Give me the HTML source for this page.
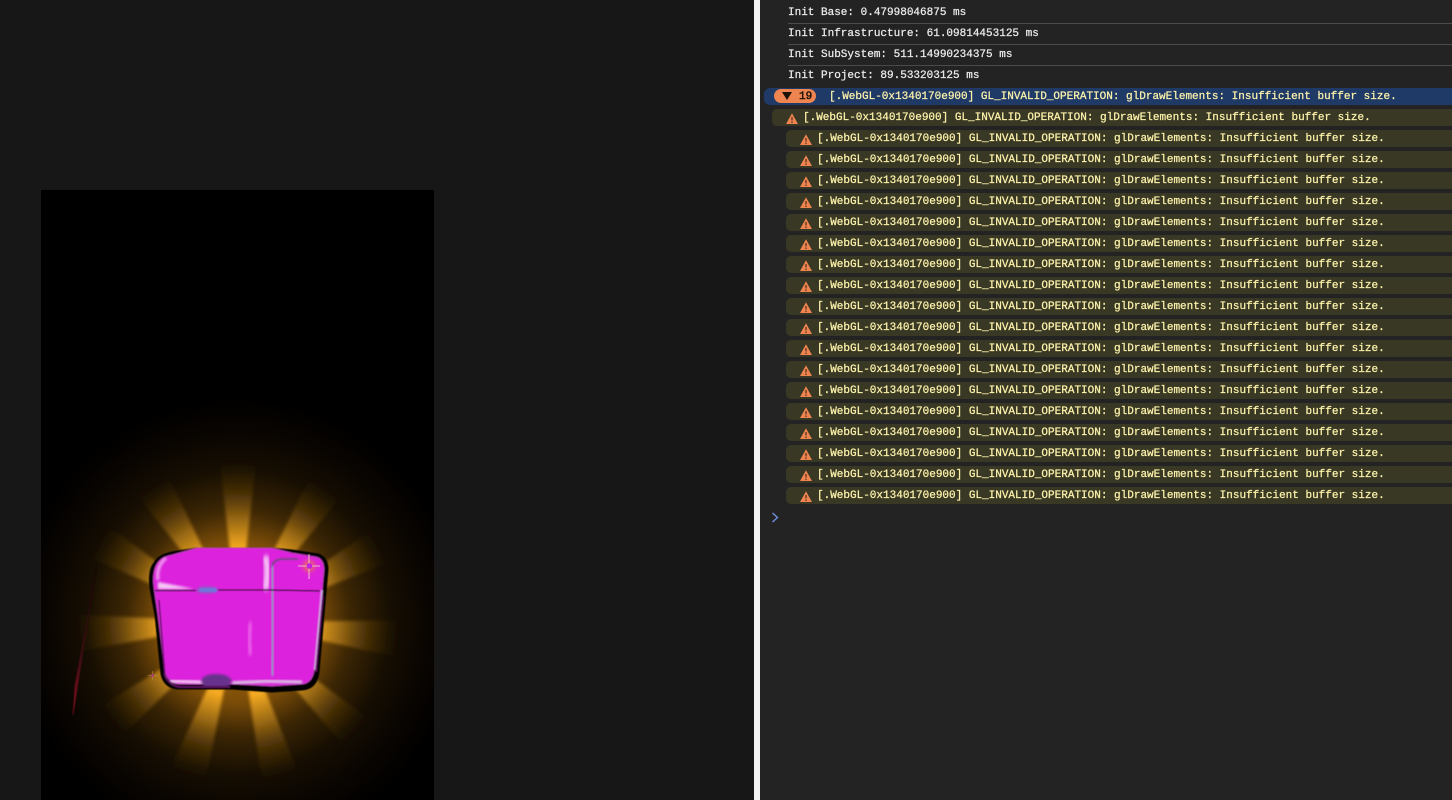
<!DOCTYPE html>
<html><head><meta charset="utf-8">
<style>
html,body{margin:0;padding:0;width:1452px;height:800px;overflow:hidden;background:#171717}
#strip{position:absolute;left:754px;top:0;width:6px;height:800px;background:#f4f4f4}
#dev{position:absolute;left:760px;top:0;width:692px;height:800px;background:#232323}
#cv{position:absolute;left:0;top:0;display:block;overflow:hidden}
.t{position:absolute;margin-top:1px;font:11px/14px "Liberation Mono",monospace;white-space:pre;color:#ececec;-webkit-text-stroke:.25px currentColor}
.y{color:#fdf3ac}
.l{position:absolute;left:788px;width:664px;height:1px;background:#4a4a4a}
.w{position:absolute;left:786px;width:666px;height:17px;background:#393824;border-radius:5px 0 0 5px}
.i{position:absolute;margin-top:1px;width:12px;height:11px}
</style></head><body>
<svg id="cv" width="760" height="800" viewBox="0 0 760 800">
<defs>
<radialGradient id="ray" gradientUnits="userSpaceOnUse" cx="238" cy="622" r="165">
<stop offset="0" stop-color="#ffb51f"/><stop offset=".45" stop-color="#f5aa20"/><stop offset=".62" stop-color="#a87416" stop-opacity=".85"/><stop offset=".8" stop-color="#5a3c0a" stop-opacity=".5"/><stop offset="1" stop-color="#2a1c04" stop-opacity="0"/></radialGradient>
<radialGradient id="glow" gradientUnits="userSpaceOnUse" cx="238" cy="622" r="225">
<stop offset="0" stop-color="#c07a10"/><stop offset=".36" stop-color="#7a4c08"/><stop offset=".5" stop-color="#3c2604"/><stop offset=".68" stop-color="#160e02"/><stop offset=".86" stop-color="#080401"/><stop offset="1" stop-color="#000"/></radialGradient>
<linearGradient id="red" x1="0" y1="0" x2="0" y2="1"><stop offset="0" stop-color="#180408"/><stop offset=".6" stop-color="#3a0a12"/><stop offset="1" stop-color="#8a1222"/></linearGradient>
<filter id="b1" x="-30%" y="-30%" width="160%" height="160%"><feGaussianBlur stdDeviation="1"/></filter>
<filter id="b2" x="-50%" y="-50%" width="200%" height="200%"><feGaussianBlur stdDeviation="2"/></filter>
<filter id="b5" x="-50%" y="-50%" width="200%" height="200%"><feGaussianBlur stdDeviation=".6"/></filter>
<filter id="bx" x="-5%" y="-5%" width="110%" height="110%"><feGaussianBlur stdDeviation=".55"/></filter>
<filter id="br" x="-5%" y="-5%" width="110%" height="110%"><feGaussianBlur stdDeviation="1.5"/></filter>
<clipPath id="cc"><rect x="41" y="190" width="393" height="610"/></clipPath>
<clipPath id="boxc"><path d="M156 563Q160 556 172 554L197 548H272L292 552L316 556Q326 558 326 570L324 592L316 672Q314 685 302 686L272 689L232 686L178 686Q166 684 163 672L157 615L152 588Q150 570 156 563Z"/></clipPath>
</defs>
<rect x="41" y="190" width="393" height="610" fill="#000"/>
<g clip-path="url(#cc)">
<rect x="41" y="397" width="393" height="403" fill="url(#glow)"/>
<g fill="url(#ray)" filter="url(#br)">
<polygon points="238,622 215.4,423.2 260.6,423.2"/>
<polygon points="238,622 327.2,443 365.2,467.6"/>
<polygon points="238,622 402.8,508.8 424,548.6"/>
<polygon points="238,622 434,620.2 433.2,665.2"/>
<polygon points="238,622 398.8,741 367.8,774"/>
<polygon points="238,622 308.2,798 264.6,798"/>
<polygon points="238,622 201.900,798 156.800,798"/>
<polygon points="238,622 95.4,762.2 67.4,726.4"/>
<polygon points="238,622 42,658.4 42,613.2"/>
<polygon points="238,622 54.6,542.2 77.2,503"/>
<polygon points="238,622 113.6,465.4 151.8,441.4"/>
</g>
<polygon points="97,565 73,715 75,685" fill="url(#red)" stroke="url(#red)" stroke-width=".5" filter="url(#b5)"/>
<path d="M152.500 671V680M148 675.500H157" fill="none" stroke="#b89a60" stroke-width=".5"/>
<circle cx="152.500" cy="675.500" r="1.200" fill="#c020a0"/>
</g>
<g filter="url(#bx)">
<path d="M154 563Q158 555 172 552L197 548H270L292 550L318 554Q328 557 328 570L326 592L319 672Q317 689 302 690L272 692L232 689L178 689Q164 688 161 674L155 615L150 588Q148 570 154 563Z" fill="#000" stroke="#000" stroke-width="1"/>
<path d="M157 564Q161 557 172 555L197 548H272L292 553L316 557Q324 559 324 570L322 592L314 671Q312 683 302 684L272 686L232 684L178 684Q168 682 165 672L158 615L154 588Q152 572 157 564Z" fill="#dd22dd" stroke="#b040b0" stroke-width="1"/>
<g clip-path="url(#boxc)">
<path d="M158 582L194 589H158Z" fill="#f6c8f6" filter="url(#b1)"/>
<path d="M158 580Q156 566 166 558" fill="none" stroke="#f0a0f0" stroke-width="3" filter="url(#b1)"/>
<path d="M170 681L228 683" fill="none" stroke="#f6d8f6" stroke-width="3" filter="url(#b1)"/>
<path d="M265 556Q270 570 265 590" fill="none" stroke="#fbe6fb" stroke-width="7" opacity=".85" filter="url(#b2)"/>
<path d="M272 568Q272 560 282 559L298 559" fill="none" stroke="#5a5070" stroke-width="1.500" filter="url(#b5)"/>
<path d="M272 566Q274 630 272 676" fill="none" stroke="#9a88c8" stroke-width="5" filter="url(#b1)"/>
<path d="M322 590L315 670" fill="none" stroke="#d8b8e8" stroke-width="2" filter="url(#b5)"/>
<path d="M232 683L268 681L302 682" fill="none" stroke="#d8cfe4" stroke-width="3" filter="url(#b1)"/>
<path d="M251 622Q247 640 251 655" fill="none" stroke="#ee70ee" stroke-width="4" filter="url(#b2)"/>
<path d="M155 590.500H196M218 590H272L320 591" stroke="#1a0a1e" stroke-width="1.300" fill="none"/>
<ellipse cx="207" cy="590" rx="11" ry="4" fill="#a04cc8" filter="url(#b1)"/>
<rect x="199" y="588" width="18" height="4" rx="2" fill="#6a78dc" filter="url(#b5)"/>
<path d="M201 681Q203 674 216 674T232 681L228 687H204Z" fill="#68308c" filter="url(#b1)"/>
</g>
<path d="M159 600L165 676Q170 686 180 687H230M316 672L323 596" fill="none" stroke="#6a1470" stroke-width="1.500"/>
</g>
<circle cx="309" cy="566" r="6" fill="#f0901c" opacity=".55" filter="url(#b2)"/>
<path d="M309 554V579M298 566H320" stroke="#f5e6c8" stroke-width=".8"/>
<circle cx="309.500" cy="566" r="2.800" fill="#c41ee8"/>
</svg>
<div id="strip"></div><div id="dev"></div>
<div class="t" style="left:788px;top:5px">Init Base: 0.47998046875 ms</div>
<div class="l" style="top:23px"></div>
<div class="t" style="left:788px;top:26px">Init Infrastructure: 61.09814453125 ms</div>
<div class="l" style="top:44px"></div>
<div class="t" style="left:788px;top:47px">Init SubSystem: 511.14990234375 ms</div>
<div class="l" style="top:65px"></div>
<div class="t" style="left:788px;top:68px">Init Project: 89.533203125 ms</div>
<div style="position:absolute;left:764px;top:88px;width:688px;height:17px;background:#1f3a66;border-radius:6px 0 0 6px"></div>
<div style="position:absolute;left:774px;top:89px;width:42px;height:14px;background:#ee8450;border-radius:7px"></div>
<svg style="position:absolute;left:781px;top:92px" width="12" height="9"><path d="M1 0H11L6 8Z" fill="#1c1208"/></svg>
<div class="t" style="left:799px;top:89px;color:#1c1208;-webkit-text-stroke:.45px #1c1208">19</div>
<div class="t y" style="left:829px;top:89px">[.WebGL-0x1340170e900] GL_INVALID_OPERATION: glDrawElements: Insufficient buffer size.</div>
<div class="w" style="left:772px;width:680px;top:109px"></div>
<svg class="i" style="left:786px;top:112px" viewBox="0 0 12 11"><path d="M6 0.300L12 11H0Z" fill="#ee8450"/><path d="M6 4V7.500M6 8.500V10" stroke="#7a4226" stroke-width="1.600"/></svg>
<div class="t y" style="left:803px;top:110px">[.WebGL-0x1340170e900] GL_INVALID_OPERATION: glDrawElements: Insufficient buffer size.</div>
<div class="w" style="top:130px"></div><svg class="i" style="left:800px;top:133px" viewBox="0 0 12 11"><path d="M6 0.300L12 11H0Z" fill="#ee8450"/><path d="M6 4V7.500M6 8.500V10" stroke="#7a4226" stroke-width="1.600"/></svg><div class="t y" style="left:817px;top:131px">[.WebGL-0x1340170e900] GL_INVALID_OPERATION: glDrawElements: Insufficient buffer size.</div>
<div class="w" style="top:151px"></div><svg class="i" style="left:800px;top:154px" viewBox="0 0 12 11"><path d="M6 0.300L12 11H0Z" fill="#ee8450"/><path d="M6 4V7.500M6 8.500V10" stroke="#7a4226" stroke-width="1.600"/></svg><div class="t y" style="left:817px;top:152px">[.WebGL-0x1340170e900] GL_INVALID_OPERATION: glDrawElements: Insufficient buffer size.</div>
<div class="w" style="top:172px"></div><svg class="i" style="left:800px;top:175px" viewBox="0 0 12 11"><path d="M6 0.300L12 11H0Z" fill="#ee8450"/><path d="M6 4V7.500M6 8.500V10" stroke="#7a4226" stroke-width="1.600"/></svg><div class="t y" style="left:817px;top:173px">[.WebGL-0x1340170e900] GL_INVALID_OPERATION: glDrawElements: Insufficient buffer size.</div>
<div class="w" style="top:193px"></div><svg class="i" style="left:800px;top:196px" viewBox="0 0 12 11"><path d="M6 0.300L12 11H0Z" fill="#ee8450"/><path d="M6 4V7.500M6 8.500V10" stroke="#7a4226" stroke-width="1.600"/></svg><div class="t y" style="left:817px;top:194px">[.WebGL-0x1340170e900] GL_INVALID_OPERATION: glDrawElements: Insufficient buffer size.</div>
<div class="w" style="top:214px"></div><svg class="i" style="left:800px;top:217px" viewBox="0 0 12 11"><path d="M6 0.300L12 11H0Z" fill="#ee8450"/><path d="M6 4V7.500M6 8.500V10" stroke="#7a4226" stroke-width="1.600"/></svg><div class="t y" style="left:817px;top:215px">[.WebGL-0x1340170e900] GL_INVALID_OPERATION: glDrawElements: Insufficient buffer size.</div>
<div class="w" style="top:235px"></div><svg class="i" style="left:800px;top:238px" viewBox="0 0 12 11"><path d="M6 0.300L12 11H0Z" fill="#ee8450"/><path d="M6 4V7.500M6 8.500V10" stroke="#7a4226" stroke-width="1.600"/></svg><div class="t y" style="left:817px;top:236px">[.WebGL-0x1340170e900] GL_INVALID_OPERATION: glDrawElements: Insufficient buffer size.</div>
<div class="w" style="top:256px"></div><svg class="i" style="left:800px;top:259px" viewBox="0 0 12 11"><path d="M6 0.300L12 11H0Z" fill="#ee8450"/><path d="M6 4V7.500M6 8.500V10" stroke="#7a4226" stroke-width="1.600"/></svg><div class="t y" style="left:817px;top:257px">[.WebGL-0x1340170e900] GL_INVALID_OPERATION: glDrawElements: Insufficient buffer size.</div>
<div class="w" style="top:277px"></div><svg class="i" style="left:800px;top:280px" viewBox="0 0 12 11"><path d="M6 0.300L12 11H0Z" fill="#ee8450"/><path d="M6 4V7.500M6 8.500V10" stroke="#7a4226" stroke-width="1.600"/></svg><div class="t y" style="left:817px;top:278px">[.WebGL-0x1340170e900] GL_INVALID_OPERATION: glDrawElements: Insufficient buffer size.</div>
<div class="w" style="top:298px"></div><svg class="i" style="left:800px;top:301px" viewBox="0 0 12 11"><path d="M6 0.300L12 11H0Z" fill="#ee8450"/><path d="M6 4V7.500M6 8.500V10" stroke="#7a4226" stroke-width="1.600"/></svg><div class="t y" style="left:817px;top:299px">[.WebGL-0x1340170e900] GL_INVALID_OPERATION: glDrawElements: Insufficient buffer size.</div>
<div class="w" style="top:319px"></div><svg class="i" style="left:800px;top:322px" viewBox="0 0 12 11"><path d="M6 0.300L12 11H0Z" fill="#ee8450"/><path d="M6 4V7.500M6 8.500V10" stroke="#7a4226" stroke-width="1.600"/></svg><div class="t y" style="left:817px;top:320px">[.WebGL-0x1340170e900] GL_INVALID_OPERATION: glDrawElements: Insufficient buffer size.</div>
<div class="w" style="top:340px"></div><svg class="i" style="left:800px;top:343px" viewBox="0 0 12 11"><path d="M6 0.300L12 11H0Z" fill="#ee8450"/><path d="M6 4V7.500M6 8.500V10" stroke="#7a4226" stroke-width="1.600"/></svg><div class="t y" style="left:817px;top:341px">[.WebGL-0x1340170e900] GL_INVALID_OPERATION: glDrawElements: Insufficient buffer size.</div>
<div class="w" style="top:361px"></div><svg class="i" style="left:800px;top:364px" viewBox="0 0 12 11"><path d="M6 0.300L12 11H0Z" fill="#ee8450"/><path d="M6 4V7.500M6 8.500V10" stroke="#7a4226" stroke-width="1.600"/></svg><div class="t y" style="left:817px;top:362px">[.WebGL-0x1340170e900] GL_INVALID_OPERATION: glDrawElements: Insufficient buffer size.</div>
<div class="w" style="top:382px"></div><svg class="i" style="left:800px;top:385px" viewBox="0 0 12 11"><path d="M6 0.300L12 11H0Z" fill="#ee8450"/><path d="M6 4V7.500M6 8.500V10" stroke="#7a4226" stroke-width="1.600"/></svg><div class="t y" style="left:817px;top:383px">[.WebGL-0x1340170e900] GL_INVALID_OPERATION: glDrawElements: Insufficient buffer size.</div>
<div class="w" style="top:403px"></div><svg class="i" style="left:800px;top:406px" viewBox="0 0 12 11"><path d="M6 0.300L12 11H0Z" fill="#ee8450"/><path d="M6 4V7.500M6 8.500V10" stroke="#7a4226" stroke-width="1.600"/></svg><div class="t y" style="left:817px;top:404px">[.WebGL-0x1340170e900] GL_INVALID_OPERATION: glDrawElements: Insufficient buffer size.</div>
<div class="w" style="top:424px"></div><svg class="i" style="left:800px;top:427px" viewBox="0 0 12 11"><path d="M6 0.300L12 11H0Z" fill="#ee8450"/><path d="M6 4V7.500M6 8.500V10" stroke="#7a4226" stroke-width="1.600"/></svg><div class="t y" style="left:817px;top:425px">[.WebGL-0x1340170e900] GL_INVALID_OPERATION: glDrawElements: Insufficient buffer size.</div>
<div class="w" style="top:445px"></div><svg class="i" style="left:800px;top:448px" viewBox="0 0 12 11"><path d="M6 0.300L12 11H0Z" fill="#ee8450"/><path d="M6 4V7.500M6 8.500V10" stroke="#7a4226" stroke-width="1.600"/></svg><div class="t y" style="left:817px;top:446px">[.WebGL-0x1340170e900] GL_INVALID_OPERATION: glDrawElements: Insufficient buffer size.</div>
<div class="w" style="top:466px"></div><svg class="i" style="left:800px;top:469px" viewBox="0 0 12 11"><path d="M6 0.300L12 11H0Z" fill="#ee8450"/><path d="M6 4V7.500M6 8.500V10" stroke="#7a4226" stroke-width="1.600"/></svg><div class="t y" style="left:817px;top:467px">[.WebGL-0x1340170e900] GL_INVALID_OPERATION: glDrawElements: Insufficient buffer size.</div>
<div class="w" style="top:487px"></div><svg class="i" style="left:800px;top:490px" viewBox="0 0 12 11"><path d="M6 0.300L12 11H0Z" fill="#ee8450"/><path d="M6 4V7.500M6 8.500V10" stroke="#7a4226" stroke-width="1.600"/></svg><div class="t y" style="left:817px;top:488px">[.WebGL-0x1340170e900] GL_INVALID_OPERATION: glDrawElements: Insufficient buffer size.</div>
<svg style="position:absolute;left:771px;top:512px" width="9" height="12"><path d="M1.500 1L6.500 5.500L1.500 10" fill="none" stroke="#6f8fe0" stroke-width="1.400"/></svg>
</body></html>
